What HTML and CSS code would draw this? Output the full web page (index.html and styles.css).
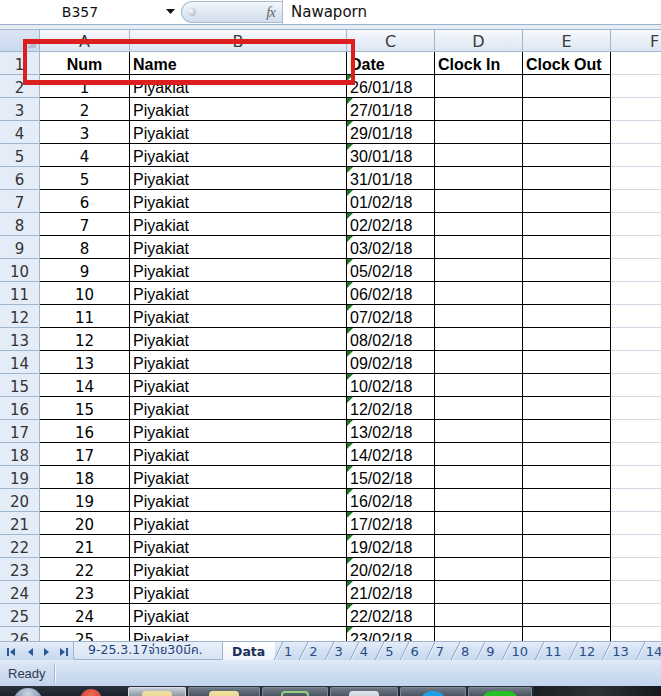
FILE: index.html
```html
<!DOCTYPE html>
<html>
<head>
<meta charset="utf-8">
<link rel="stylesheet" href="styles.css">
</head>
<body>
<div class="app">
  <div class="fbar">
    <div class="namebox">B357</div>
    <div class="nbarrow"><svg width="9" height="5" viewBox="0 0 9 5"><path d="M0 0H9L4.5 5Z" fill="#111"/></svg></div>
    <div class="capsule"><span class="dot"></span><span class="fx">fx</span></div>
    <div class="formula">Nawaporn</div>
  </div>
  <div class="strip"></div>
  <div class="sheet">
    <div class="grid">
      <div class="corner"><span class="tri"></span></div><div class="ch">A</div><div class="ch">B</div><div class="ch">C</div><div class="ch">D</div><div class="ch">E</div><div class="ch">F</div>
      <div class="rh">1</div><div class="c a bold">Num</div><div class="c l bold">Name</div><div class="c l bold">Date</div><div class="c l bold">Clock In</div><div class="c l bold">Clock Out</div><div class="c f"></div>
      <div class="rh">2</div><div class="c a">1</div><div class="c l">Piyakiat</div><div class="c l t">26/01/18</div><div class="c"></div><div class="c"></div><div class="c f"></div>
      <div class="rh">3</div><div class="c a">2</div><div class="c l">Piyakiat</div><div class="c l t">27/01/18</div><div class="c"></div><div class="c"></div><div class="c f"></div>
      <div class="rh">4</div><div class="c a">3</div><div class="c l">Piyakiat</div><div class="c l t">29/01/18</div><div class="c"></div><div class="c"></div><div class="c f"></div>
      <div class="rh">5</div><div class="c a">4</div><div class="c l">Piyakiat</div><div class="c l t">30/01/18</div><div class="c"></div><div class="c"></div><div class="c f"></div>
      <div class="rh">6</div><div class="c a">5</div><div class="c l">Piyakiat</div><div class="c l t">31/01/18</div><div class="c"></div><div class="c"></div><div class="c f"></div>
      <div class="rh">7</div><div class="c a">6</div><div class="c l">Piyakiat</div><div class="c l t">01/02/18</div><div class="c"></div><div class="c"></div><div class="c f"></div>
      <div class="rh">8</div><div class="c a">7</div><div class="c l">Piyakiat</div><div class="c l t">02/02/18</div><div class="c"></div><div class="c"></div><div class="c f"></div>
      <div class="rh">9</div><div class="c a">8</div><div class="c l">Piyakiat</div><div class="c l t">03/02/18</div><div class="c"></div><div class="c"></div><div class="c f"></div>
      <div class="rh">10</div><div class="c a">9</div><div class="c l">Piyakiat</div><div class="c l t">05/02/18</div><div class="c"></div><div class="c"></div><div class="c f"></div>
      <div class="rh">11</div><div class="c a">10</div><div class="c l">Piyakiat</div><div class="c l t">06/02/18</div><div class="c"></div><div class="c"></div><div class="c f"></div>
      <div class="rh">12</div><div class="c a">11</div><div class="c l">Piyakiat</div><div class="c l t">07/02/18</div><div class="c"></div><div class="c"></div><div class="c f"></div>
      <div class="rh">13</div><div class="c a">12</div><div class="c l">Piyakiat</div><div class="c l t">08/02/18</div><div class="c"></div><div class="c"></div><div class="c f"></div>
      <div class="rh">14</div><div class="c a">13</div><div class="c l">Piyakiat</div><div class="c l t">09/02/18</div><div class="c"></div><div class="c"></div><div class="c f"></div>
      <div class="rh">15</div><div class="c a">14</div><div class="c l">Piyakiat</div><div class="c l t">10/02/18</div><div class="c"></div><div class="c"></div><div class="c f"></div>
      <div class="rh">16</div><div class="c a">15</div><div class="c l">Piyakiat</div><div class="c l t">12/02/18</div><div class="c"></div><div class="c"></div><div class="c f"></div>
      <div class="rh">17</div><div class="c a">16</div><div class="c l">Piyakiat</div><div class="c l t">13/02/18</div><div class="c"></div><div class="c"></div><div class="c f"></div>
      <div class="rh">18</div><div class="c a">17</div><div class="c l">Piyakiat</div><div class="c l t">14/02/18</div><div class="c"></div><div class="c"></div><div class="c f"></div>
      <div class="rh">19</div><div class="c a">18</div><div class="c l">Piyakiat</div><div class="c l t">15/02/18</div><div class="c"></div><div class="c"></div><div class="c f"></div>
      <div class="rh">20</div><div class="c a">19</div><div class="c l">Piyakiat</div><div class="c l t">16/02/18</div><div class="c"></div><div class="c"></div><div class="c f"></div>
      <div class="rh">21</div><div class="c a">20</div><div class="c l">Piyakiat</div><div class="c l t">17/02/18</div><div class="c"></div><div class="c"></div><div class="c f"></div>
      <div class="rh">22</div><div class="c a">21</div><div class="c l">Piyakiat</div><div class="c l t">19/02/18</div><div class="c"></div><div class="c"></div><div class="c f"></div>
      <div class="rh">23</div><div class="c a">22</div><div class="c l">Piyakiat</div><div class="c l t">20/02/18</div><div class="c"></div><div class="c"></div><div class="c f"></div>
      <div class="rh">24</div><div class="c a">23</div><div class="c l">Piyakiat</div><div class="c l t">21/02/18</div><div class="c"></div><div class="c"></div><div class="c f"></div>
      <div class="rh">25</div><div class="c a">24</div><div class="c l">Piyakiat</div><div class="c l t">22/02/18</div><div class="c"></div><div class="c"></div><div class="c f"></div>
      <div class="rh">26</div><div class="c a">25</div><div class="c l">Piyakiat</div><div class="c l t">23/02/18</div><div class="c"></div><div class="c"></div><div class="c f"></div>
    </div>
    <div class="redbox"></div>
  </div>
  <div class="tabs">
    <div class="nav">
      <svg width="73" height="19" viewBox="0 0 73 19">
        <g fill="#2b569a">
          <rect x="7" y="6" width="2" height="8"/>
          <path d="M15 6V14L10 10Z"/>
          <path d="M33 6V14L28 10Z"/>
          <path d="M44 6V14L49 10Z"/>
          <path d="M60 6V14L65 10Z"/>
          <rect x="66" y="6" width="2" height="8"/>
        </g>
      </svg>
    </div>
    <div class="tab first">9-25.3.17จ่าย30มีค.</div>
    <div class="tab active">Data</div>
    <div class="tab n">1</div>
    <div class="tab n">2</div>
    <div class="tab n">3</div>
    <div class="tab n">4</div>
    <div class="tab n">5</div>
    <div class="tab n">6</div>
    <div class="tab n">7</div>
    <div class="tab n">8</div>
    <div class="tab n">9</div>
    <div class="tab n">10</div>
    <div class="tab n">11</div>
    <div class="tab n">12</div>
    <div class="tab n">13</div>
    <div class="tab n">14</div>
  </div>
  <div class="status">
    <div class="ready">Ready</div>
    <div class="sep"></div>
  </div>
  <div class="taskbar">
    <div class="orbwrap"><span class="orb"></span></div>
    <div class="redwrap"><span class="redico"></span></div>
    <div class="tb w58 hl"><span class="ico yellow"></span></div>
    <div class="tb w72"><span class="ico yellow"></span></div>
    <div class="tb w66"><span class="ico greenline"></span></div>
    <div class="tb w68"><span class="ico gray"></span></div>
    <div class="tb w66"><span class="ico blue"></span></div>
    <div class="tb w64"><span class="ico green"></span></div>
    <div class="tbrest"></div>
  </div>
</div>
</body>
</html>
```

FILE: styles.css
```css
* { box-sizing: border-box; }
body {
  margin: 0;
  width: 661px;
  height: 696px;
  overflow: hidden;
  background: #fff;
  font-family: "Liberation Sans", Arial, sans-serif;
}
.app {
  display: flex;
  flex-direction: column;
  width: 661px;
  height: 696px;
  overflow: hidden;
}

/* formula bar */
.fbar {
  flex: none;
  height: 25px;
  display: flex;
  background: #fff;
  border-bottom: 1px solid #9aafc9;
}
.namebox {
  width: 160px;
  display: flex;
  align-items: center;
  justify-content: center;
  font: 14px "DejaVu Sans", sans-serif;
  color: #111;
}
.nbarrow {
  width: 20px;
  display: flex;
  align-items: center;
  justify-content: center;
  padding-bottom: 2px;
}
.capsule {
  width: 101px;
  margin: 1px 0 1px 1px;
  border: 1px solid #a9bbd4;
  border-right: none;
  border-radius: 12px 0 0 12px;
  background: linear-gradient(#f4f7fc, #dde7f3 60%, #d2dfef);
  display: flex;
  align-items: center;
  justify-content: space-between;
  padding: 0 7px 0 6px;
}
.dot {
  width: 8px;
  height: 8px;
  border-radius: 50%;
  background: radial-gradient(circle at 35% 35%, #ffffff, #b9c2cc 70%, #98a2ae);
}
.fx {
  font: italic 15px "Liberation Serif", serif;
  color: #6a6a6a;
  letter-spacing: -1px;
}
.formula {
  flex: 1;
  border-left: 1px solid #a9bbd4;
  display: flex;
  align-items: center;
  padding-left: 8px;
  font: 15px "DejaVu Sans", sans-serif;
  color: #111;
}
.strip {
  flex: none;
  height: 4px;
  background: #e6ecf3;
}

/* sheet */
.sheet {
  flex: none;
  height: 612px;
  position: relative;
  overflow: hidden;
}
.grid {
  display: grid;
  width: 699px;
  grid-template-columns: 40px 90px 217px 88px 88px 88px 88px;
  grid-auto-rows: 23px;
}
.corner {
  background: linear-gradient(#dbe6f4, #c9d9ee);
  border-right: 1px solid #9eb6ce;
  border-bottom: 1px solid #9eb6ce;
  border-top: 1px solid #9eb6ce;
  display: flex;
  align-items: flex-end;
  justify-content: flex-end;
  padding: 0 3px 3px 0;
}
.tri {
  width: 9px;
  height: 9px;
  background: #b3bfcd;
  clip-path: polygon(100% 0, 100% 100%, 0 100%);
}
.ch {
  background: linear-gradient(#f7f9fd, #e9eff8 50%, #dde6f2);
  border-top: 1px solid #9eb6ce;
  border-right: 1px solid #9eb6ce;
  border-bottom: 1px solid #9eb6ce;
  display: flex;
  align-items: center;
  justify-content: center;
  font: 16px "DejaVu Sans", sans-serif;
  color: #3b3b3b;
  padding-top: 1px;
}
.rh {
  background: #e4ecf7;
  border-right: 1px solid #9eb6ce;
  border-bottom: 1px solid #9eb6ce;
  display: flex;
  align-items: flex-end;
  justify-content: center;
  font: 15px "DejaVu Sans", sans-serif;
  line-height: 18px;
  color: #333;
}
.c {
  border-right: 1px solid #000;
  border-bottom: 1px solid #000;
  display: flex;
  align-items: flex-end;
  font-size: 16px;
  line-height: 18px;
  color: #000;
  white-space: nowrap;
  overflow: hidden;
}
.c.a {
  justify-content: center;
  font: 15px "DejaVu Sans", sans-serif;
  line-height: 18px;
}
.c.l {
  padding-left: 3px;
}
.c.bold {
  font-family: "Liberation Sans", Arial, sans-serif;
  font-weight: bold;
  font-size: 16px;
}
.c.f {
  border-right: 1px solid #d0d7e5;
  border-bottom: 1px solid #d0d7e5;
}
.c.t {
  position: relative;
}
.c.t::before {
  content: "";
  position: absolute;
  left: 0;
  top: 0;
  width: 6px;
  height: 6px;
  background: #1f7a25;
  clip-path: polygon(0 0, 100% 0, 0 100%);
}
.redbox {
  position: absolute;
  left: 23px;
  top: 10px;
  width: 332px;
  height: 46px;
  border: 4px solid #dc1e1e;
  border-top-width: 5px;
  border-bottom-width: 5px;
}

/* sheet tabs */
.tabs {
  flex: none;
  height: 19px;
  display: flex;
  background: linear-gradient(#e4edf8, #d3e1f3 50%, #c8d9ef);
  border-top: 1px solid #9db3cf;
  overflow: hidden;
  white-space: nowrap;
}
.nav {
  flex: none;
  width: 73px;
  height: 18px;
  display: flex;
}
.tab {
  flex: none;
  position: relative;
  display: flex;
  align-items: center;
  height: 18px;
  font: 13px "DejaVu Sans", "Noto Sans Thai", "Noto Sans", sans-serif;
  color: #23437a;
}
.tab.first {
  width: 150px;
  padding-left: 14px;
  font-size: 12.5px;
  overflow: hidden;
  background: linear-gradient(#e9f0f9, #d7e4f4);
  border-left: 1px solid #9db3cf;
  border-right: 1px solid #9db3cf;
  border-bottom: 1px solid #9db3cf;
  border-radius: 0 0 0 3px;
}
.tab.active {
  width: 52px;
  padding-left: 9px;
  font-weight: bold;
  font-size: 12.5px;
  color: #1a305a;
  background: linear-gradient(#ffffff, #eef3fa);
}
.tab.n {
  padding: 0 8px 0 9px;
  color: #2a4c86;
}
.tab.n::before {
  content: "";
  position: absolute;
  left: 3px;
  top: 0;
  height: 18px;
  border-left: 1px solid #8ba4c7;
  box-shadow: 1px 0 0 #f3f7fc;
  transform: skewX(-26deg);
}

/* status bar */
.status {
  flex: none;
  height: 26px;
  display: flex;
  align-items: center;
  background: linear-gradient(#e2ebf7, #d5e2f3 25%, #c8d9ef 75%, #c3d5ee);
}
.ready {
  padding: 0 8px;
  font: 13px "Liberation Sans", Arial, sans-serif;
  color: #2f3a4a;
}
.sep {
  width: 2px;
  height: 20px;
  border-left: 1px solid #a6bad5;
  border-right: 1px solid #f2f6fb;
}

/* taskbar */
.taskbar {
  flex: none;
  height: 10px;
  display: flex;
  background: linear-gradient(#29333e, #1a232d);
  overflow: hidden;
}
.orbwrap {
  width: 75px;
  display: flex;
  padding-left: 13px;
  padding-top: 2px;
}
.orb {
  width: 30px;
  height: 30px;
  border-radius: 50%;
  background: radial-gradient(circle at 50% 20%, #c9d6e4, #6f8aa6 60%, #334c66);
}
.redwrap {
  width: 53px;
  display: flex;
  padding-left: 5px;
  padding-top: 3px;
}
.redico {
  width: 22px;
  height: 22px;
  border-radius: 50%;
  background: radial-gradient(circle at 50% 30%, #f06a55, #c62a1e);
}
.tb {
  flex: none;
  margin-top: 1px;
  margin-right: 2px;
  border: 1px solid #7f8b97;
  border-bottom: none;
  border-radius: 2px 2px 0 0;
  background: linear-gradient(#6f7a86, #4a5561);
  display: flex;
  justify-content: center;
  padding-top: 3px;
}
.tb.hl {
  background: linear-gradient(#c9cfd6, #8e99a5);
  border-color: #d8dde3;
}
.w58 { width: 58px; }
.w72 { width: 72px; }
.w66 { width: 66px; }
.w68 { width: 68px; }
.w64 { width: 64px; }
.ico {
  width: 30px;
  height: 20px;
  border-radius: 4px 4px 0 0;
}
.ico.yellow { background: linear-gradient(#f2e3a6, #d9b95c); }
.ico.greenline { background: transparent; border: 2px solid #8fd07a; border-bottom: none; width: 28px; }
.ico.gray { background: linear-gradient(#dfe4ea, #aab4bf); }
.ico.blue { background: #1fa0e6; border-radius: 12px 12px 0 0; width: 26px; }
.ico.green { background: #22c022; border-radius: 10px 10px 0 0; width: 36px; }
.tbrest {
  flex: 1;
  background: linear-gradient(90deg, #1a1f24, #2c3136 50%, #15191d);
}
```
